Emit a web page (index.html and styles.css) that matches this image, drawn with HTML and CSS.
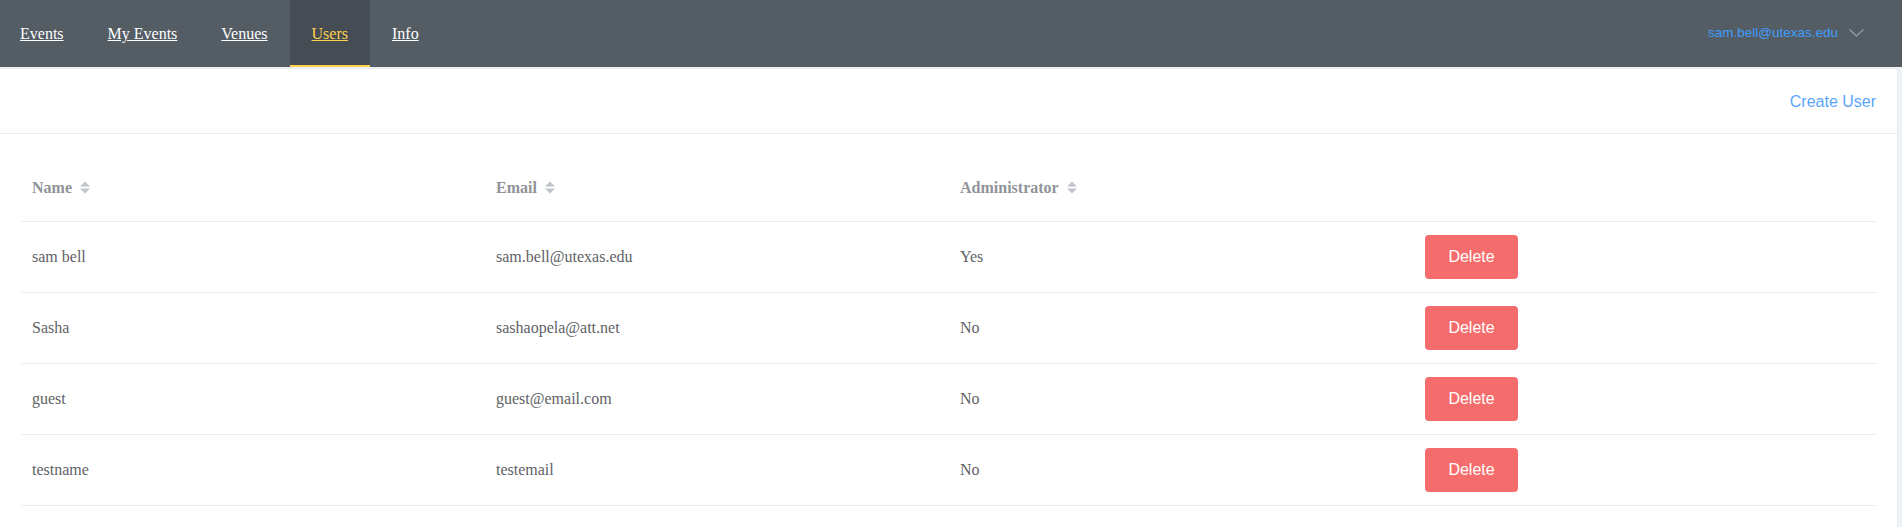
FILE: index.html
```html
<!DOCTYPE html>
<html lang="en">
<head>
<meta charset="utf-8">
<title>Users</title>
<link rel="stylesheet" href="styles.css">
</head>
<body>
<nav class="topnav">
  <ul class="menu">
    <li class="menu-item"><a href="#">Events</a></li>
    <li class="menu-item"><a href="#">My Events</a></li>
    <li class="menu-item"><a href="#">Venues</a></li>
    <li class="menu-item is-active"><a href="#">Users</a></li>
    <li class="menu-item"><a href="#">Info</a></li>
  </ul>
  <div class="account">
    <span class="account-email">sam.bell@utexas.edu</span>
    <svg class="chevron" width="15" height="8" viewBox="0 0 15 8"><polyline points="0.5,0.5 7.5,7 14.5,0.5" fill="none" stroke="#9aa0a6" stroke-width="1.1"/></svg>
  </div>
</nav>
<main class="card">
  <div class="card-header">
    <a class="create-link" href="#">Create User</a>
  </div>
  <div class="card-body">
    <div class="users-table" role="table">
      <div class="row head" role="row">
        <div class="cell">Name <svg class="sort" width="10" height="13" viewBox="0 0 10 13"><path d="M0 5.5 L5 0.5 L10 5.5 Z M0 7.5 L5 12.5 L10 7.5 Z" fill="#c0c4cc"/></svg></div>
        <div class="cell">Email <svg class="sort" width="10" height="13" viewBox="0 0 10 13"><path d="M0 5.5 L5 0.5 L10 5.5 Z M0 7.5 L5 12.5 L10 7.5 Z" fill="#c0c4cc"/></svg></div>
        <div class="cell">Administrator <svg class="sort" width="10" height="13" viewBox="0 0 10 13"><path d="M0 5.5 L5 0.5 L10 5.5 Z M0 7.5 L5 12.5 L10 7.5 Z" fill="#c0c4cc"/></svg></div>
        <div class="cell"></div>
      </div>
      <div class="row" role="row">
        <div class="cell">sam bell</div>
        <div class="cell">sam.bell@utexas.edu</div>
        <div class="cell">Yes</div>
        <div class="cell"><button class="btn-danger">Delete</button></div>
      </div>
      <div class="row" role="row">
        <div class="cell">Sasha</div>
        <div class="cell">sashaopela@att.net</div>
        <div class="cell">No</div>
        <div class="cell"><button class="btn-danger">Delete</button></div>
      </div>
      <div class="row" role="row">
        <div class="cell">guest</div>
        <div class="cell">guest@email.com</div>
        <div class="cell">No</div>
        <div class="cell"><button class="btn-danger">Delete</button></div>
      </div>
      <div class="row" role="row">
        <div class="cell">testname</div>
        <div class="cell">testemail</div>
        <div class="cell">No</div>
        <div class="cell"><button class="btn-danger">Delete</button></div>
      </div>
    </div>
  </div>
</main>
</body>
</html>
```

FILE: styles.css
```css
* { box-sizing: border-box; }

html, body {
  margin: 0;
  padding: 0;
}

body {
  background: #eef1f5;
  font-family: "Liberation Serif", "Times New Roman", serif;
  color: #606266;
  overflow: hidden;
}

.topnav {
  display: flex;
  justify-content: space-between;
  align-items: stretch;
  height: 67px;
  background: #545c64;
}

.menu {
  display: flex;
  list-style: none;
  margin: 0 0 0 -2px;
  padding: 0;
}

.menu-item {
  height: 67px;
  padding: 2px 22px 0;
  border-bottom: 2px solid transparent;
  line-height: 63px;
  font-size: 16px;
}

.menu-item a {
  color: #ffffff;
  text-decoration: underline;
}

.menu-item.is-active {
  background: #464c53;
  border-bottom-color: #ffd04b;
}

.menu-item.is-active a {
  color: #ffd04b;
}

.account {
  display: flex;
  align-items: center;
  gap: 11px;
  padding-right: 38px;
  padding-bottom: 2px;
}

.account-email {
  font-family: "Liberation Sans", Arial, sans-serif;
  font-size: 13.5px;
  color: #409eff;
}

.chevron {
  display: block;
  margin-top: 1px;
}

.card {
  margin: 1px 4px 0 0;
  background: #ffffff;
  border: 1px solid #e6ebf0;
  border-left: none;
  border-radius: 0 4px 4px 0;
  min-height: 470px;
}

.card-header {
  display: flex;
  justify-content: flex-end;
  align-items: center;
  height: 65px;
  padding: 0 21px 0 20px;
  border-bottom: 1px solid #ebeef5;
}

.create-link {
  font-family: "Liberation Sans", Arial, sans-serif;
  font-size: 16px;
  color: #5aa6fb;
  text-decoration: none;
  margin-top: 2px;
}

.card-body {
  padding: 20px 20px 20px 21px;
}

.users-table {
  display: flex;
  flex-direction: column;
}

.row {
  display: grid;
  grid-template-columns: repeat(4, 1fr);
  height: 71px;
  border-bottom: 1px solid #ebeef5;
  align-items: center;
  font-size: 16px;
  color: #606266;
}

.row.head {
  height: 68px;
  font-weight: bold;
  color: #909399;
}

.cell {
  display: flex;
  align-items: center;
  padding: 0 11px;
  white-space: nowrap;
}

.sort {
  display: block;
  margin-left: 8px;
}

.btn-danger {
  width: 93px;
  height: 44px;
  margin-left: 1px;
  border: none;
  border-radius: 4px;
  background: #f56c6c;
  color: #ffffff;
  font-family: "Liberation Sans", Arial, sans-serif;
  font-size: 16px;
  cursor: pointer;
}
```
